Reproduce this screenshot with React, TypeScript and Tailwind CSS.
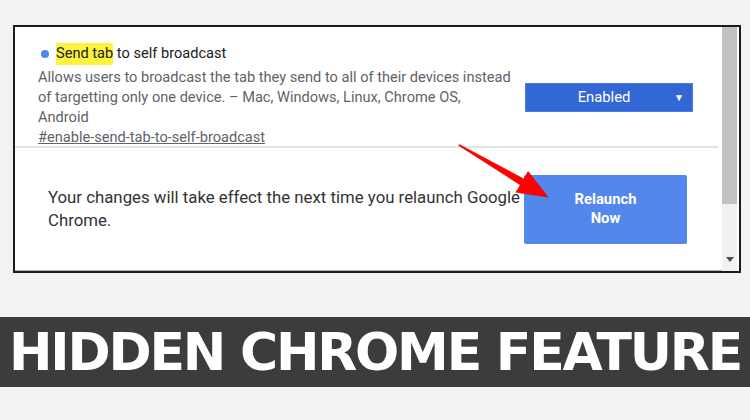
import React from 'react';

const font = { fontFamily: 'Roboto, "Noto Sans", Arial, sans-serif' };

const RedArrow: React.FC = () => (
  <svg className="pointer-events-none absolute left-0 top-0" width="750" height="420" viewBox="0 0 750 420">
    <polygon
      points="459.3,144.6 523.9,178.9 528.1,171.5 548,197 516,192.3 520.3,184.9 458.7,145.4"
      fill="#f00"
      stroke="#e00000"
      strokeWidth="0.6"
      strokeLinejoin="round"
    />
  </svg>
);

const Scrollbar: React.FC = () => (
  <div className="flex w-[15px] flex-col bg-[#f1f1f1]">
    <div className="h-[177px] bg-[#c1c1c1]" />
    <div className="flex-1" />
    <div className="flex h-[22px] items-start justify-center pt-[8px]">
      <div className="h-0 w-0 border-x-[4px] border-t-[5px] border-x-transparent border-t-[#505050]" />
    </div>
  </div>
);

const App: React.FC = () => {
  return (
    <div className="relative h-[420px] w-[750px] overflow-hidden bg-[#f2f2f2]" style={font}>
      <div className="pl-[13px] pt-[25px]">
        <div className="flex h-[248px] w-[728px] border-2 border-[#1c1c1c] bg-white">
          <div className="flex w-[707px] flex-col border-b border-[#b4b4b4]">
            {/* flag entry */}
            <div className="h-[119px]">
              <div className="flex items-center pl-[23px] pr-[29px] pt-[17px]">
                <div className="w-[484px]">
                  <div className="flex h-[20px] items-center pl-[3px] text-[14.6px] text-[#202124]">
                    <span className="mr-[7px] h-[8px] w-[8px] rounded-full bg-[#4f86ec]" />
                    <span className="bg-[#fcf33c]">Send tab</span>
                    <span>&nbsp;to self broadcast</span>
                  </div>
                  <p className="mt-[3px] text-[14.6px] leading-[20px] text-[#5f6368]">
                    Allows users to broadcast the tab they send to all of their devices instead of targetting only one device. – Mac, Windows, Linux, Chrome OS,
                    <br />
                    Android
                  </p>
                  <div className="mt-[2px] text-[14.6px] leading-[17px] text-[#5f6368] underline">
                    #enable-send-tab-to-self-broadcast
                  </div>
                </div>
                <div className="ml-auto mt-[4px] flex h-[29px] w-[168px] items-center border border-[#4a7be0] bg-[#3367d6] text-[14.8px] text-white">
                  <span className="flex-1 pl-[8px] text-center">Enabled</span>
                  <span className="pr-[8px] text-[10px]">▼</span>
                </div>
              </div>
            </div>
            <div className="mr-[4px] h-[2px] bg-[#e3e3e3]" />
            {/* relaunch bar */}
            <div className="flex flex-1 items-center pl-[33px] pr-[35px]">
              <p className="w-[476px] text-[16.8px] leading-[23px] text-[#333]">
                Your changes will take effect the next time you relaunch Google Chrome.
              </p>
              <button className="ml-auto flex h-[69px] w-[163px] flex-col items-center justify-center rounded-[2px] bg-[#5387ec] text-[14.8px] font-bold leading-[19px] text-white">
                <span>Relaunch</span>
                <span>Now</span>
              </button>
            </div>
          </div>
          <Scrollbar />
        </div>
      </div>

      <div className="mt-[44px] flex h-[70px] items-center justify-center bg-[#3c3c3c]">
        <span
          className="whitespace-nowrap text-[52px] font-bold leading-none tracking-[-2.2px] text-white"
          style={{ fontFamily: '"DejaVu Sans", sans-serif' }}
        >
          HIDDEN CHROME FEATURE
        </span>
      </div>

      <RedArrow />
    </div>
  );
};

export default App;
